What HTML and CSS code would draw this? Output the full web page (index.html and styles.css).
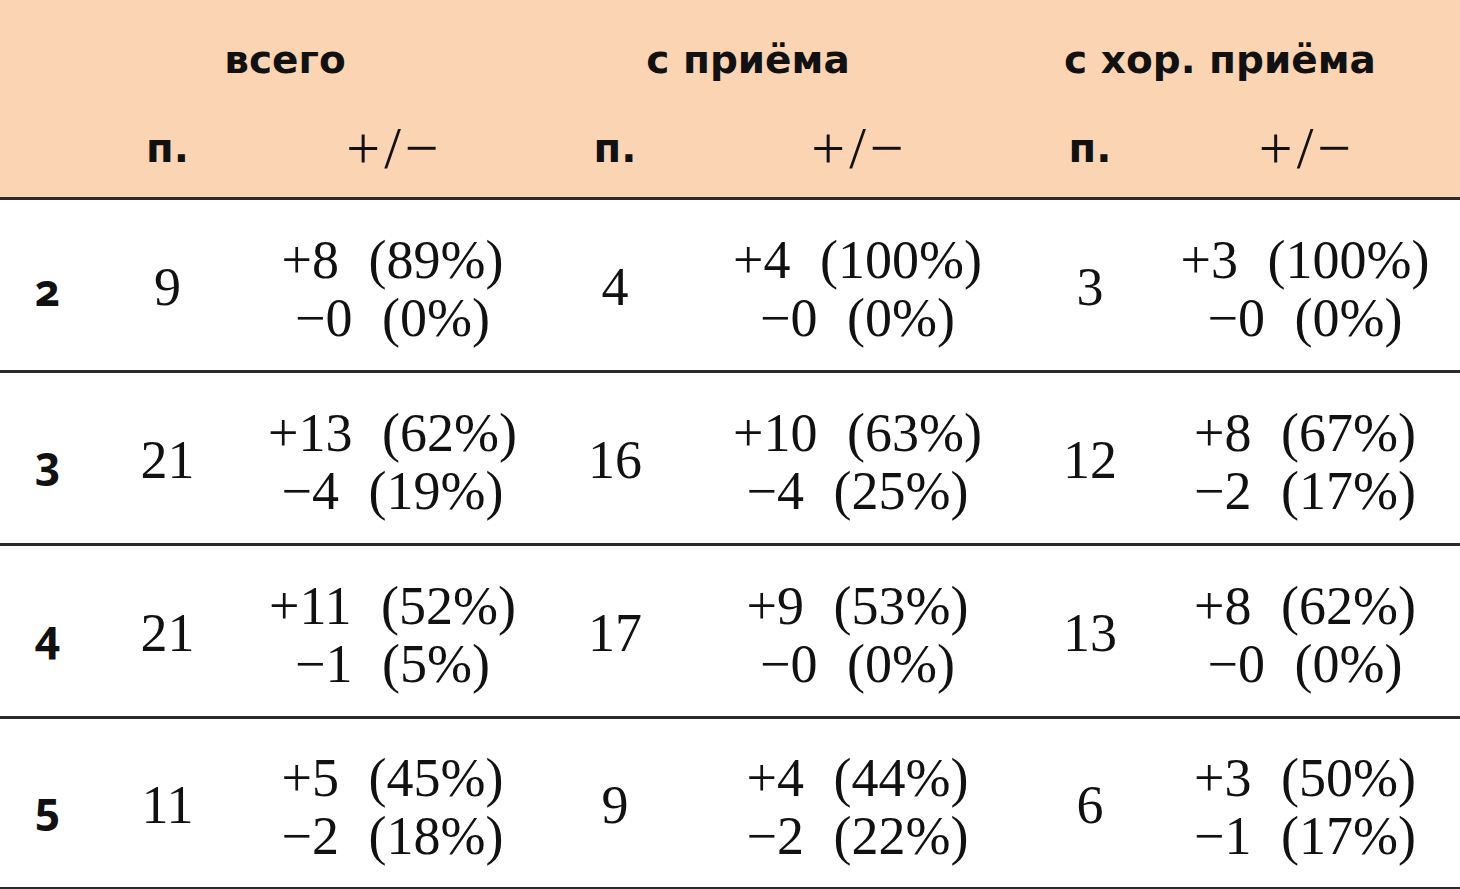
FILE: index.html
```html
<!DOCTYPE html>
<html lang="ru">
<head>
<meta charset="utf-8">
<title>Таблица</title>
<link rel="stylesheet" href="styles.css">
</head>
<body>
<div class="table">
  <div class="head">
    <div class="groups">
      <div></div>
      <div class="gh">всего</div>
      <div class="gh">с приёма</div>
      <div class="gh">с хор. приёма</div>
      <div></div>
    </div>
    <div class="cols sub">
      <div></div>
      <div class="sh">п.</div><div class="pmh">+/−</div>
      <div class="sh">п.</div><div class="pmh">+/−</div>
      <div class="sh">п.</div><div class="pmh">+/−</div>
    </div>
  </div>

  <div class="cols row">
    <div class="lbl">2</div>
    <div class="n">9</div><div class="pm"><span>+8 (89%)</span><span>−0 (0%)</span></div>
    <div class="n">4</div><div class="pm"><span>+4 (100%)</span><span>−0 (0%)</span></div>
    <div class="n">3</div><div class="pm"><span>+3 (100%)</span><span>−0 (0%)</span></div>
  </div>
  <div class="cols row">
    <div class="lbl">3</div>
    <div class="n">21</div><div class="pm"><span>+13 (62%)</span><span>−4 (19%)</span></div>
    <div class="n">16</div><div class="pm"><span>+10 (63%)</span><span>−4 (25%)</span></div>
    <div class="n">12</div><div class="pm"><span>+8 (67%)</span><span>−2 (17%)</span></div>
  </div>
  <div class="cols row">
    <div class="lbl">4</div>
    <div class="n">21</div><div class="pm"><span>+11 (52%)</span><span>−1 (5%)</span></div>
    <div class="n">17</div><div class="pm"><span>+9 (53%)</span><span>−0 (0%)</span></div>
    <div class="n">13</div><div class="pm"><span>+8 (62%)</span><span>−0 (0%)</span></div>
  </div>
  <div class="cols row last">
    <div class="lbl">5</div>
    <div class="n">11</div><div class="pm"><span>+5 (45%)</span><span>−2 (18%)</span></div>
    <div class="n">9</div><div class="pm"><span>+4 (44%)</span><span>−2 (22%)</span></div>
    <div class="n">6</div><div class="pm"><span>+3 (50%)</span><span>−1 (17%)</span></div>
  </div>
</div>
</body>
</html>
```

FILE: styles.css
```css
html, body {
  margin: 0;
  padding: 0;
  background: #ffffff;
}

.table {
  width: 1460px;
  color: #111;
}

.head {
  background: #fbd4b4;
  height: 197px;
  border-bottom: 3px solid #2b2b2b;
}

.groups {
  display: grid;
  grid-template-columns: 95px 380px 546px 398px 41px;
  height: 112px;
  align-items: center;
}

.cols {
  display: grid;
  grid-template-columns: 95px 145px 305px 140px 345px 120px 310px;
  align-items: center;
}

.sub {
  height: 72px;
}

.gh {
  text-align: center;
  font-family: "DejaVu Sans", sans-serif;
  font-weight: bold;
  font-size: 39px;
  padding-bottom: 0;
  padding-top: 6px;
}

.sh {
  text-align: center;
  font-family: "DejaVu Sans", sans-serif;
  font-weight: bold;
  font-size: 40px;
}

.pmh {
  text-align: center;
  font-family: "Liberation Serif", serif;
  font-size: 60px;
  letter-spacing: 4px;
  padding-left: 4px;
}

.row {
  height: 170px;
  border-bottom: 3px solid #2b2b2b;
}

.row.last {
  height: 168px;
}

.lbl {
  text-align: center;
  font-family: "Noto Sans", sans-serif;
  font-weight: bold;
  font-size: 44px;
  font-feature-settings: "onum" 1;
  padding-top: 8px;
}

.n {
  text-align: center;
  font-family: "Liberation Serif", serif;
  font-size: 54px;
  padding-top: 4px;
}

.pm {
  display: flex;
  flex-direction: column;
  align-items: center;
  font-family: "Liberation Serif", serif;
  font-size: 54px;
  line-height: 58px;
  word-spacing: 16px;
  padding-top: 8px;
}
```
